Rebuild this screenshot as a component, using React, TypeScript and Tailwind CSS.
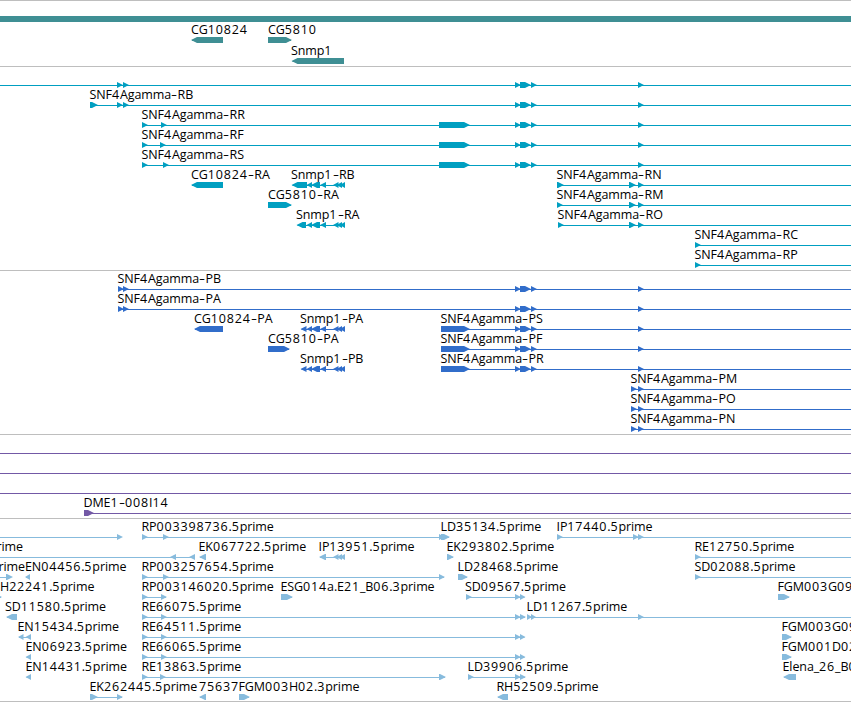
type Glyph = [start: number, end: number];

interface Feature {
  label?: string;
  labelX?: number;
  // intron line, drawn behind the exons
  line?: Glyph;
  exons?: Glyph[];
  reverse?: boolean;
}

interface Track {
  name: string;
  color: string;
  tall?: boolean;
  rows: Feature[][];
}

const WIDTH = 851;

const CLUSTER: Glyph[] = [
  [515, 521],
  [520, 531],
  [531, 537],
];
const LATE: Glyph = [638, 644];
const SNMP_TAIL: Glyph[] = [
  [306.5, 312],
  [311, 320],
  [320, 326],
  [333, 338.5],
  [336.5, 342],
  [339.5, 345],
];
const TRIPLE: Glyph[] = SNMP_TAIL.slice(3);

const gene = (label: string, labelX: number, exons: Glyph[], reverse = false): Feature => ({
  label,
  labelX,
  exons,
  reverse,
  line: [exons[0][0] + 1, exons[exons.length - 1][1] - 1],
});

const open = (label: string, labelX: number, exons: Glyph[]): Feature => ({
  label,
  labelX,
  exons,
  line: [exons[0][0] + 1, WIDTH],
});

const tracks: Track[] = [
  {
    name: 'gene',
    color: '#3f8f94',
    tall: true,
    rows: [
      [{ exons: [[-10, 870]] }],
      [gene('CG10824', 191, [[191, 223]], true), gene('CG5810', 268, [[268, 292]])],
      [gene('Snmp1', 291, [[291.5, 344]], true)],
    ],
  },
  {
    name: 'transcript',
    color: '#009fc1',
    rows: [
      [{ line: [0, WIDTH], exons: [[117, 123], [123, 129], ...CLUSTER, LATE] }],
      [open('SNF4Agamma-RB', 89.5, [[90, 98], [117, 123], [123, 129], ...CLUSTER, LATE])],
      [open('SNF4Agamma-RR', 141.5, [[142, 148], [161, 167], [439, 470], ...CLUSTER, LATE])],
      [open('SNF4Agamma-RF', 141.5, [[142, 148], [160, 166], [439, 470], ...CLUSTER, LATE])],
      [open('SNF4Agamma-RS', 141.5, [[142, 148], [163, 169], [439, 470], ...CLUSTER, LATE])],
      [
        gene('CG10824-RA', 191, [[191, 223]], true),
        gene('Snmp1-RB', 291, [[291.5, 307], ...SNMP_TAIL], true),
        open('SNF4Agamma-RN', 556.5, [[557, 564], [629, 636], LATE]),
      ],
      [
        gene('CG5810-RA', 268, [[268, 292]]),
        open('SNF4Agamma-RM', 556.5, [[557, 563], [629, 636], LATE]),
      ],
      [
        gene('Snmp1-RA', 296, [[296.5, 306], ...SNMP_TAIL], true),
        open('SNF4Agamma-RO', 557.5, [[558, 564], [629, 636], LATE]),
      ],
      [open('SNF4Agamma-RC', 694.5, [[695, 701]])],
      [open('SNF4Agamma-RP', 694.5, [[695, 701]])],
    ],
  },
  {
    name: 'protein',
    color: '#316dca',
    rows: [
      [open('SNF4Agamma-PB', 117.5, [[118, 124], [123, 129], ...CLUSTER, LATE])],
      [open('SNF4Agamma-PA', 117.5, [[118, 124], [123, 129], ...CLUSTER, LATE])],
      [
        gene('CG10824-PA', 194, [[194, 223]], true),
        gene('Snmp1-PA', 300, [[300.5, 306.5], ...SNMP_TAIL], true),
        open('SNF4Agamma-PS', 440.5, [[441, 470], ...CLUSTER, LATE]),
      ],
      [
        gene('CG5810-PA', 268, [[268, 290]]),
        open('SNF4Agamma-PF', 440.5, [[441, 470], ...CLUSTER, LATE]),
      ],
      [
        gene('Snmp1-PB', 300, [[300.5, 306.5], ...SNMP_TAIL], true),
        open('SNF4Agamma-PR', 440.5, [[441, 470], ...CLUSTER, LATE]),
      ],
      [open('SNF4Agamma-PM', 630.5, [[631, 637], LATE])],
      [open('SNF4Agamma-PO', 630.5, [[631, 637], LATE])],
      [open('SNF4Agamma-PN', 630.5, [[631, 637], LATE])],
    ],
  },
  {
    name: 'bac',
    color: '#7359a6',
    rows: [
      [{ line: [0, WIDTH] }],
      [{ line: [0, WIDTH] }],
      [{ line: [0, WIDTH] }],
      [open('DME1-008I14', 83.5, [[84, 94]])],
    ],
  },
  {
    name: 'est',
    color: '#87bbdd',
    rows: [
      [
        { line: [0, 118], exons: [[117, 123]] },
        gene('RP003398736.5prime', 141.5, [[142, 148], [163, 169], [439, 445]]),
        gene('LD35134.5prime', 440.5, [[441, 450]]),
        open('IP17440.5prime', 556.5, [[557, 563], [633, 639], LATE]),
      ],
      [
        { label: 'prime', labelX: -11, line: [0, 194], exons: [[170, 176], [189, 195]], reverse: true },
        gene('EK067722.5prime', 198.5, [[199, 206]], true),
        gene('IP13951.5prime', 318.5, [[319, 326], ...TRIPLE], true),
        gene('EK293802.5prime', 446.5, [[447, 454]]),
        open('RE12750.5prime', 694.5, [[695, 701]]),
      ],
      [
        { label: 'prime', labelX: -9, line: [0, 7], exons: [[6, 13]] },
        gene('EN04456.5prime', 25, [[25, 30]], true),
        gene('RP003257654.5prime', 141.5, [[142, 148], [163, 169], [439, 445]]),
        gene('LD28468.5prime', 457.5, [[458, 468]]),
        open('SD02088.5prime', 694.5, [[695, 701]]),
      ],
      [
        gene('H22241.5prime', 0, [[-4, 2]]),
        gene('RP003146020.5prime', 141.5, [[142, 148], [161, 167]]),
        gene('ESG014a.E21_B06.3prime', 280.5, [[281, 293]]),
        gene('SD09567.5prime', 465, [[466, 472], [515, 521], [520, 525.5]]),
        gene('FGM003G09.3prime', 777.5, [[778, 790]]),
      ],
      [
        gene('SD11580.5prime', 5, [[6, 17]], true),
        gene('RE66075.5prime', 141.5, [[142, 148], [161, 167], [515, 521], [520, 526]]),
        open('LD11267.5prime', 526.5, [[527, 532], [531, 536], LATE]),
      ],
      [
        gene('EN15434.5prime', 17.5, [[18, 23.5], [25.5, 31]], true),
        gene('RE64511.5prime', 141.5, [[142, 148], [161, 167], [515, 521], [520, 525.5]]),
        gene('FGM003G09.5prime', 781.5, [[782, 792]]),
      ],
      [
        gene('EN06923.5prime', 25.5, [[25.5, 31]], true),
        gene('RE66065.5prime', 141.5, [[142, 148], [161, 167], [515, 521], [520, 525.5]]),
        gene('FGM001D02.5prime', 781.5, [[782, 792]]),
      ],
      [
        gene('EN14431.5prime', 25.5, [[25.5, 31]], true),
        gene('RE13863.5prime', 141.5, [[142, 148], [160, 166], [439, 446]]),
        gene('LD39906.5prime', 467.5, [[468, 474], [515, 521], [520, 526]]),
        gene('Elena_26_B06.5prime', 782.5, [[783, 796]], true),
      ],
      [
        gene('EK262445.5prime', 89.5, [[90, 98], [117, 123]]),
        gene('75637', 199, [[199, 206]], true),
        gene('FGM003H02.3prime', 238.5, [[239, 250]]),
        gene('RH52509.5prime', 496.5, [[497, 508]], true),
      ],
    ],
  },
];

function arrowPath([start, end]: Glyph, reverse?: boolean) {
  const head = Math.min(6, end - start);
  return reverse
    ? `M${end} 0H${start + head}L${start} 3L${start + head} 6H${end}Z`
    : `M${start} 0H${end - head}L${end} 3L${end - head} 6H${start}Z`;
}

// digits and dashes are set wider than letters
function Label({ text, x }: { text: string; x: number }) {
  return (
    <span
      className="absolute top-[-2px] leading-[18px] tracking-[-0.1px] whitespace-nowrap"
      style={{ left: x }}
    >
      {text.split(/(\d+|-)/).map((part, i) => {
        if (part === '-') {
          return (
            <span key={i} className="mx-[1.3px] inline-block scale-x-150">
              {part}
            </span>
          );
        }
        return /\d/.test(part) ? (
          <span key={i} className="tracking-[0.85px]">
            {part}
          </span>
        ) : (
          part
        );
      })}
    </span>
  );
}

function FeatureRow({ features, color, tall }: { features: Feature[]; color: string; tall?: boolean }) {
  return (
    <div className={tall ? 'relative h-[21px] pt-3.5' : 'relative h-5 pt-3.5'}>
      <svg width={WIDTH} height={6} fill={color} className="block">
        {features.map((feature, i) => (
          <g key={i}>
            {feature.line && (
              <rect x={feature.line[0]} y={3} width={feature.line[1] - feature.line[0]} height={1} />
            )}
            {feature.exons?.map((exon, j) => (
              <path key={j} d={arrowPath(exon, feature.reverse)} />
            ))}
          </g>
        ))}
      </svg>
      {features.map(
        (feature, i) => feature.label && <Label key={i} text={feature.label} x={feature.labelX ?? 0} />,
      )}
    </div>
  );
}

export default function App() {
  return (
    <main className="flex h-[702px] w-[851px] flex-col overflow-hidden bg-white font-['Open_Sans','Noto_Sans',sans-serif] text-[12.5px] font-[370] text-black">
      {tracks.map((track) => (
        <section
          key={track.name}
          className={
            track.tall
              ? 'border-t border-[#bebebe] pt-px pb-px'
              : 'border-t border-[#bebebe] pt-px pb-0.5 last:border-b last:pb-px'
          }
        >
          {track.rows.map((features, i) => (
            <FeatureRow key={i} features={features} color={track.color} tall={track.tall} />
          ))}
        </section>
      ))}
    </main>
  );
}
